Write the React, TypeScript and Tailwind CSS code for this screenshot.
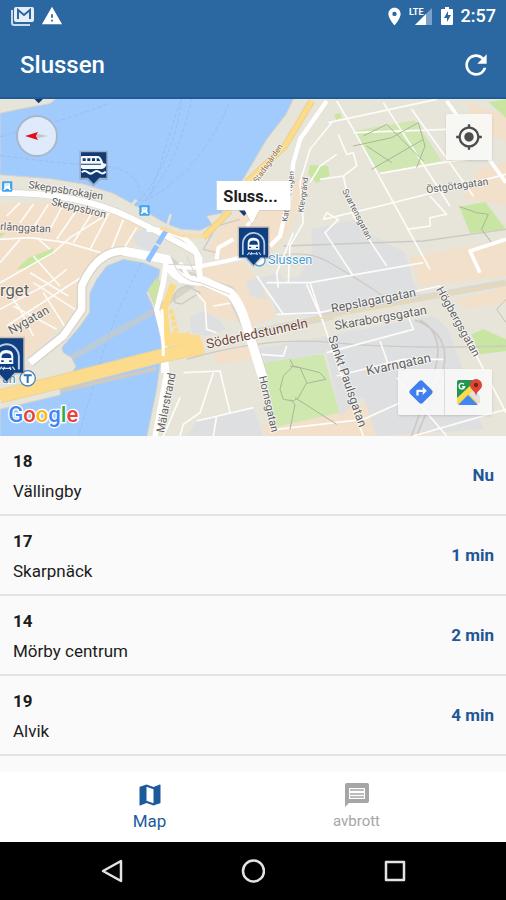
import React, { useState } from 'react';
import {
  MdDirections,
  MdLocationOn,
  MdMap,
  MdMyLocation,
  MdRefresh,
  MdWarning,
} from 'react-icons/md';

interface Departure {
  line: string;
  destination: string;
  time: string;
}

interface StreetLabel {
  name: string;
  x: number;
  y: number;
  angle: number;
  size: number;
  color?: string;
}

const departures: Departure[] = [
  { line: '18', destination: 'Vällingby', time: 'Nu' },
  { line: '17', destination: 'Skarpnäck', time: '1 min' },
  { line: '14', destination: 'Mörby centrum', time: '2 min' },
  { line: '19', destination: 'Alvik', time: '4 min' },
];

const streetLabels: StreetLabel[] = [
  { name: 'Skeppsbrokajen', x: 84, y: 276, angle: 9, size: 32 },
  { name: 'Skeppsbron', x: 152, y: 326, angle: 14, size: 32 },
  { name: 'rlånggatan', x: 0, y: 402, angle: 3, size: 32 },
  { name: 'rget', x: 0, y: 600, angle: 0, size: 50 },
  { name: 'Nygatan', x: 34, y: 716, angle: -30, size: 36 },
  { name: 'Stadsgården', x: 772, y: 262, angle: -55, size: 24, color: '#8a6a4c' },
  { name: 'Katarinavägen', x: 862, y: 378, angle: -82, size: 24 },
  { name: 'Klevgränd', x: 910, y: 350, angle: -82, size: 24 },
  { name: 'Svartensgatan', x: 1026, y: 284, angle: 63, size: 26 },
  { name: 'Östgötagatan', x: 1280, y: 292, angle: -8, size: 31 },
  { name: 'Repslagargatan', x: 996, y: 650, angle: -11, size: 37 },
  { name: 'Skaraborgsgatan', x: 1006, y: 702, angle: -10, size: 37 },
  { name: 'Kvarngatan', x: 1102, y: 838, angle: -12, size: 39 },
  { name: 'Högbergsgatan', x: 1308, y: 580, angle: 61, size: 34 },
  { name: 'Sankt Paulsgatan', x: 984, y: 724, angle: 71, size: 37 },
  { name: 'Hornsgatan', x: 776, y: 842, angle: 77, size: 33 },
  { name: 'Mälarstrand', x: 492, y: 1012, angle: -79, size: 34 },
  { name: 'Söderledstunneln', x: 622, y: 758, angle: -12, size: 40, color: '#6d4538' },
];

// metro pin, 84 x 108 units with its tip at the bottom center
const MetroPin = ({ x, y, scale }: { x: number; y: number; scale: number }) => (
  <g transform={`translate(${x} ${y}) scale(${scale})`}>
    <path d="M-4-4h92v94H66L42 114 18 90H-4z" fill="#7b7f8a" opacity=".35" />
    <path d="M0 0h84v86H62L42 108 22 86H0z" fill="#0f3f80" />
    <path d="M11 78V46a31 31 0 0 1 62 0v32" fill="none" stroke="#b9cde6" strokeWidth="5" />
    <path d="M25 64V44q0-15 17-15t17 15v20z" fill="#f4f8fc" />
    <path d="M30 45q1-8 12-8t12 8v4H30z" fill="#0f3f80" />
    <path d="M29 57h6m14 0h6" stroke="#0f3f80" strokeWidth="4" />
    <path d="M30 71l-6 8m13-8l-3 8m16-8l3 8m4-8l6 8M30 75h24" stroke="#d6e3f2" strokeWidth="3" />
  </g>
);

const FerryPin = ({ x, y }: { x: number; y: number }) => (
  <g transform={`translate(${x} ${y})`}>
    <path d="M-5-5h86v88H58L38 102 18 83H-5z" fill="#9299a8" opacity=".6" />
    <path d="M0 0h76v76H55L38 94 21 76H0z" fill="#123a73" />
    <path d="M0 14q0-3 4-3h48q9 3 15 22l9 2q-2 14-14 15H5L0 46z" fill="#f7fafc" />
    <path d="M5 18h9v8H5zm14 0h9v8h-9zm14 0h9v8h-9zm14 0h6l5 8H47zM0 34h60v3H0z" fill="#123a73" />
    <path d="M2 60q9-8 18 0t18 0 18 0 18-2" fill="none" stroke="#fff" strokeWidth="6" />
  </g>
);

const StationSquare = ({ x, y }: { x: number; y: number }) => (
  <g transform={`translate(${x} ${y})`}>
    <rect width="31" height="31" rx="3" fill="#42a5ee" />
    <path d="M7 6h17v14l3 6h-5l-3-4h-7l-3 4H4l3-6z" fill="#fff" />
    <path d="M11 11h9" stroke="#9fd0f7" strokeWidth="3" />
  </g>
);

const CityMap = () => (
  <svg
    viewBox="0 9 1518 1011"
    preserveAspectRatio="xMidYMid slice"
    className="block h-full w-full font-[Roboto,sans-serif]"
    role="img"
    aria-label="Karta över Slussen"
  >
    <rect y="9" width="1518" height="1020" fill="#e7e4da" />

    {/* building blocks */}
    <g fill="#f2e0ca">
      <path d="M0 325L150 318 330 350 440 392 395 450 320 480 250 540 228 650 90 780 0 790z" />
      <path d="M740 330L860 250 930 250 900 330 870 400 820 470 690 490 620 470 660 400z" />
      <path d="M600 500L730 500 780 560 830 660 750 690 620 650 590 580z" />
      <path d="M1230 485L1518 430V540L1260 570z" />
      <path d="M1400 20L1518 60V140L1430 90z" />
      <path d="M1440 215L1518 200V330L1390 305z" />
      <path d="M1370 612L1518 570V620L1390 640z" />
      <path d="M640 770L750 750 760 790 650 806zM780 985L860 990 1110 915 1130 1020H800zM1195 930L1320 965 1280 1020H1190z" />
    </g>
    <g fill="#dedfe1">
      <path d="M935 400L1060 372 1120 420 1215 470 1240 560 1260 600 960 660 830 655 800 560 900 540 935 470z" />
      <path d="M740 556L840 530 860 570 790 585 800 610 750 600zM570 665L610 645 650 665 680 700 620 720 575 710z" />
      <path d="M770 760L1300 660 1345 700 1450 1000 1130 1020 1090 900 1020 960 980 770 800 800z" />
      <path d="M560 1020L590 975 760 935 790 1020zM395 415L440 395 480 420 460 465 410 450z" />
    </g>

    {/* parks */}
    <g fill="#c8e6a1">
      <path d="M1058 105L1245 73 1325 195 1140 232z" fill="#d0e7b3" />
      <path d="M1378 332L1455 318 1518 400 1410 412z" />
      <path d="M790 800L970 774 1018 950 830 992z" fill="#cfe8b0" />
      <path d="M930 207L985 210 988 240 950 262 925 235zM1415 715L1450 700 1518 730V765L1440 775z" />
      <path d="M50 520L85 485 160 457 160 475 90 515zM0 410L18 412 0 425zM1465 18L1518 10V65zM1002 55l20-3 2 14-16 5z" />
    </g>

    {/* water */}
    <g fill="#a2cbfd" stroke="#d5d2c8" strokeWidth="3">
      <path d="M0 52L60 39 150 23 172 5H882L858 55 800 130 735 240 700 297 665 352 620 360 636 386 600 403 545 400 500 384 400 325 340 292 250 264 150 248 0 236z" />
      <path d="M370 490L430 500 480 520 475 550 440 590 460 635 477 700 487 760 470 880 440 1024H0V940L180 897 187 870 228 812 215 785 190 770 185 755 240 690 268 650 270 590 290 550 320 510z" />
      <path d="M444 581L472 544 480 560 465 630z" fill="#c8e6a1" />
    </g>
    <g fill="none" stroke="#7faee0" strokeWidth="2" strokeDasharray="12 7" opacity=".65">
      <path d="M0 122Q210 70 325 22M0 178Q160 200 245 205M320 212Q410 220 420 290M405 330Q520 200 545 9M425 320Q530 220 575 9M435 315Q600 230 690 15M450 300Q490 180 540 15" />
      <path d="M425 500Q340 660 300 800T235 1020" />
    </g>

    {/* rail lines */}
    <g fill="none" stroke="#cccac3">
      <path d="M215 785L470 640 600 550" strokeWidth="18" opacity=".65" />
      <path d="M180 885L470 818" strokeWidth="12" />
      <path d="M560 790Q800 720 1000 740T1518 750M850 450L1270 435 1518 400" strokeWidth="4" />
      <path d="M1245 672Q1370 720 1320 850L1250 1020M1260 672Q1345 720 1295 850L1235 1020" strokeWidth="5" />
      <path d="M760 500Q900 450 980 495T1150 600L1240 600" strokeWidth="4" />
      <path d="M525 620Q515 580 560 570L600 590 545 624zM650 470L610 460 650 390 720 370" strokeWidth="4" />
      <path d="M960 660L1518 560M760 710L1000 660" strokeWidth="20" opacity=".45" />
    </g>

    {/* small streets */}
    <g fill="none" stroke="#fdfcf9" strokeWidth="5">
      <path d="M0 430L90 425 200 440 320 475M0 560L160 470 210 425 330 350M20 690L250 540M40 630L170 700M90 530L205 600M0 640L150 560 200 520M100 720L60 640 20 580M100 560L240 650M60 320L20 360M100 325L60 380M145 325L100 395M190 325L150 400M235 335L170 430M280 345L220 440M325 355L270 460M370 370L330 470M410 395L370 460" />
      <path d="M130 590L200 700M180 570L100 480M0 500L60 430M110 425L150 460" />
      <path d="M985 80L1310 10M1010 15L1060 100 1290 520M1150 20L1350 330M1060 110L1340 100M1235 40L1420 300M1290 300L1340 355 1290 365 1290 390 1220 400M970 370L1140 330 1518 235M1140 232L1325 200 1400 190" />
      <path d="M995 80L930 160 900 260 910 380 870 450 865 560M1015 115L1040 175 1060 170 1070 210 1030 240 960 250M1010 175L960 210 930 260M1030 240L1045 310 1060 360 1160 510M970 370L980 350 1015 370 975 410 1060 540M880 410L830 530 835 575" />
      <path d="M800 560L930 560 1270 500M770 540L850 655M830 655L960 650 1320 570M930 560L990 740 1090 1020M920 565L970 680M860 750L850 780 780 775M980 770L1240 700 1225 660M1140 735L1170 820M1010 840L1210 790 1330 790M1320 570L1518 950M1190 845L1340 1020" />
      <path d="M590 590L615 620 620 700 650 710M640 630L700 620M550 830L660 825 690 950M640 830L600 950 550 985 540 1020M540 905L490 1020M590 975L760 935M650 960L640 1020M830 1000L1090 970 1200 920M1240 1020L1518 940" />
    </g>

    {/* park paths */}
    <g fill="none" stroke="#aab698" strokeWidth="3">
      <path d="M1060 150L1175 125 1255 80M1090 120L1160 85 1270 195M1255 80L1275 150 1250 215M1115 220L1270 130M1100 150L1175 200M1378 332L1430 350 1465 355 1445 400 1475 440" />
      <path d="M870 790L880 810 850 840 840 880 850 910 880 915 895 905 920 860 900 815 870 810M880 810L960 830 978 850 920 862M870 910L885 925 870 1000M885 905L1010 985" />
      <path d="M1518 610L1490 640 1518 680" stroke="#c8c0b2" />
    </g>

    {/* main white roads */}
    <g fill="none" stroke="#d8d4ca" strokeLinejoin="round">
      <path d="M0 290Q240 290 390 365T590 470L600 540" strokeWidth="22" />
      <path d="M90 800L190 720 245 640 245 570Q290 465 370 465L500 490 560 540 690 585 740 690 790 840" strokeWidth="30" />
    </g>
    <g fill="none" stroke="#fff" strokeLinejoin="round">
      <path d="M0 290Q240 290 390 365T590 470L600 540" strokeWidth="18" />
      <path d="M440 400Q570 400 600 490L600 545" strokeWidth="14" />
      <path d="M90 800L190 720 245 640 245 570Q290 465 370 465L500 490" strokeWidth="22" />
      <path d="M370 465L500 490Q520 560 610 555L690 590Q720 620 740 690L790 850" strokeWidth="28" />
      <path d="M500 490L490 560 470 640 492 730 500 830 465 1020" strokeWidth="16" />
      <path d="M500 510L580 515 680 495 800 465M540 500L570 550M515 520L545 560M650 490L655 455 700 430" strokeWidth="12" />
      <path d="M980 15L900 130 880 200 870 290 840 420 810 450" strokeWidth="13" />
      <path d="M760 370L740 390M1340 15L1518 260M1518 430L1410 465 1440 530" strokeWidth="11" />
    </g>
    <g fill="none" stroke="#d9d6ce" strokeWidth="3">
      <path d="M520 500Q540 555 600 560L690 595M560 480L590 545M505 505L585 508" />
    </g>
    <path d="M502 398L440 500" stroke="#91c1ff" strokeWidth="15" strokeDasharray="54 6" />
    <path d="M390 330L410 312M500 395L512 355" stroke="#e7e2d5" strokeWidth="8" />

    {/* highways */}
    <g fill="none">
      <path d="M935 15L855 150 740 260M690 345L610 425" stroke="#e6cf92" strokeWidth="20" />
      <path d="M935 15L855 150 740 260M690 345L610 425" stroke="#fbdc8a" strokeWidth="15" />
      <path d="M480 395L545 418 610 420" stroke="#f8dda6" strokeWidth="11" />
      <path d="M520 565L492 640 505 750" stroke="#fcdb83" strokeWidth="20" />
      <path d="M512 640L540 750M560 710L570 750" stroke="#fcdb83" strokeWidth="14" strokeDasharray="14 5" />
      <path d="M0 901L180 857 490 778 610 754" stroke="#ead49b" strokeWidth="43" />
      <path d="M0 901L180 857 490 778 610 754" stroke="#fcdc8c" strokeWidth="37" />
      <path d="M505 750L515 708 600 718 605 745z" fill="#fcdc8c" />
      <path d="M920 675L1518 562" stroke="#ecd9a8" strokeWidth="5" />
    </g>
    <path d="M486 640L490 780M488 800V830" fill="none" stroke="#fff" strokeWidth="9" />

    <g>
      {streetLabels.map((label) => (
        <text
          key={label.name}
          transform={`translate(${label.x} ${label.y}) rotate(${label.angle})`}
          fontSize={label.size}
          fill={label.color || '#5f5f5f'}
          stroke="#ffffff"
          strokeWidth="5"
          strokeOpacity=".7"
          paintOrder="stroke"
        >
          {label.name}
        </text>
      ))}
    </g>

    <StationSquare x={6} y={256} />
    <StationSquare x={418} y={328} />

    {/* metro stations */}
    <text x="804" y="504" fontSize="38" fill="#4a9bd0" stroke="#fff" strokeWidth="5" paintOrder="stroke">
      Slussen
    </text>
    <circle cx="778" cy="493" r="17" fill="#fff" stroke="#5ba3d8" strokeWidth="4" />
    <text x="6" y="861" fontSize="37" fill="#3f87b8" stroke="#fff" strokeWidth="5" paintOrder="stroke">
      an
    </text>
    <circle cx="83" cy="847" r="23" fill="#fff" stroke="#4a86be" strokeWidth="4" />
    <path d="M71 838h24M83 838v23" stroke="#2c6fae" strokeWidth="6" />

    <path d="M103 9h26l-13 13z" fill="#123a73" />
    <FerryPin x={243} y={169} />
    <path d="M716 343h32l-16 17z" fill="#0f3f80" />
    <MetroPin x={717} y={395} scale={1.04} />
    <MetroPin x={-31} y={727} scale={1.2} />

    {/* callout */}
    <path d="M650 258h222v87h-94l-22 42-22-42h-84z" fill="#777" opacity=".3" />
    <path d="M650 255h222v88h-94l-22 40-22-40h-84z" fill="#fff" />
    <text x="670" y="318" fontSize="49" fontWeight="700" fill="#202020">
      Sluss...
    </text>

    <text x="25" y="979" fontSize="66" fontWeight="500" stroke="#fff" strokeWidth="8" paintOrder="stroke">
      <tspan fill="#4285f4">G</tspan>
      <tspan fill="#ea4335">o</tspan>
      <tspan fill="#fbbc05">o</tspan>
      <tspan fill="#4285f4">g</tspan>
      <tspan fill="#34a853">l</tspan>
      <tspan fill="#ea4335">e</tspan>
    </text>
  </svg>
);

const GoogleMapsIcon = () => (
  <svg viewBox="0 0 28 28" className="h-7 w-7" aria-hidden="true">
    <path d="M4 2h18v24H2V4q0-2 2-2z" fill="#219653" />
    <path d="M2 21L20 5l4 18-2 3H2z" fill="#f5d64a" />
    <path d="M14 16l5-5 6 7v6l-1 2z" fill="#dfe1e5" />
    <path d="M2 20L18 5l3 4L2 26z" fill="#fbdb4b" />
    <path d="M3 27l10-10 10 10z" fill="#4285f4" />
    <path d="M9 6.3a2.8 2.8 0 1 0 .6 2.5H7" fill="none" stroke="#fff" strokeWidth="1.4" />
    <path d="M21 1a6 6 0 0 0-6 6c0 5 5 5 6 11 1-6 6-6 6-11a6 6 0 0 0-6-6z" fill="#df4437" />
    <circle cx="21" cy="7" r="2.2" fill="#7c231d" />
  </svg>
);

const MessageIcon = () => (
  <svg viewBox="0 0 28 28" className="h-7 w-7" aria-hidden="true">
    <path d="M4 2h20q2 0 2 2v16q0 2-2 2H6l-4 4V4q0-2 2-2z" fill="currentColor" />
    <path d="M6 7h16v11H6z" fill="#fff" />
    <path d="M7 9h14M7 13h14M7 16h14" stroke="currentColor" strokeWidth="1.5" />
  </svg>
);

const StatusBar = () => (
  <div className="flex h-8 items-center justify-between pr-[10px] pl-[11px] text-white">
    <div className="flex items-center gap-[7px]">
      <svg viewBox="0 0 23 20" className="h-5 w-[23px]" aria-hidden="true">
        <path d="M1 4v13q0 2 2 2h16" fill="none" stroke="#c8daeb" strokeWidth="2" />
        <rect x="3" y="1" width="20" height="15" rx="2" fill="#e6eff8" />
        <path d="M7 13V4l6 5 6-5v9" fill="none" stroke="#2b68a2" strokeWidth="2" />
      </svg>
      <MdWarning className="h-[22px] w-[22px]" />
    </div>
    <div className="flex items-center">
      <MdLocationOn className="h-[21px] w-[21px]" />
      <svg viewBox="0 0 24 20" className="ml-1 h-5 w-6" aria-hidden="true">
        <path d="M23 2v17H6z" fill="#7ba2c8" />
        <path d="M17 8v11H6z" fill="#fff" />
        <text x="0" y="9" fontSize="9" fontWeight="700" fill="#fff" stroke="#2b68a2" strokeWidth="1" paintOrder="stroke" className="font-[Roboto,sans-serif]">
          LTE
        </text>
      </svg>
      <svg viewBox="0 0 12 18" className="ml-2 h-[18px] w-3" aria-hidden="true">
        <path d="M4 0h4v2h3q1 0 1 1v14q0 1-1 1H1q-1 0-1-1V3q0-1 1-1h3z" fill="#fff" />
        <path d="M7 4L3 11h3v4l4-7H7z" fill="#2b68a2" />
      </svg>
      <span className="ml-2 text-lg leading-5 font-medium">2:57</span>
    </div>
  </div>
);

const App: React.FC = () => {
  const [activeTab, setActiveTab] = useState('map');

  return (
    <div className="flex min-h-screen flex-col bg-[#fafafa] font-[Roboto,'Noto_Sans',sans-serif] text-[#1c1c1c]">
      <header className="border-b-2 border-[#1d5c99] bg-[#2b68a2]">
        <StatusBar />
        <div className="flex h-[65px] items-center justify-between pt-px pr-[14px] pl-5 text-white">
          <h1 className="text-2xl font-medium">Slussen</h1>
          <button type="button" aria-label="Uppdatera" className="flex h-8 w-8 items-center justify-center">
            <MdRefresh className="h-8 w-8" />
          </button>
        </div>
      </header>

      <section className="relative aspect-[506/337] w-full overflow-hidden">
        <CityMap />
        <button
          type="button"
          aria-label="Kompass"
          className="absolute top-4 left-4 flex h-[42px] w-[42px] items-center justify-center rounded-full border-2 border-[#a9b7cb] bg-[#dfeafa]"
        >
          <svg viewBox="0 0 24 10" className="h-[10px] w-6" aria-hidden="true">
            <path d="M0 5l13-4-2 4 2 4z" fill="#e0101b" />
            <path d="M11 5l2-2 10 2-10 2z" fill="#c5c6c8" />
          </svg>
        </button>
        <button
          type="button"
          aria-label="Min plats"
          className="absolute top-[15px] right-[14px] flex h-[46px] w-[46px] items-center justify-center rounded-xs bg-[#f8f8f6]/95 text-[#4d4d4d] shadow"
        >
          <MdMyLocation className="h-7 w-7" />
        </button>
        <div className="absolute right-[14px] bottom-[21px] flex divide-x divide-[#dcdcdc] rounded-xs bg-[#f8f8f8]/90 shadow">
          <button type="button" aria-label="Vägbeskrivning" className="flex h-[46px] w-[47px] items-center justify-center text-[#3f80ee]">
            <MdDirections className="h-7 w-7" />
          </button>
          <button type="button" aria-label="Öppna i Google Maps" className="flex h-[46px] w-[47px] items-center justify-center">
            <GoogleMapsIcon />
          </button>
        </div>
      </section>

      <ul className="flex-1">
        {departures.map((departure) => (
          <li
            key={departure.line}
            className="flex h-20 items-center justify-between border-b-2 border-[#e2e2e2] pt-[2px] pr-3 pl-[13px]"
          >
            <div>
              <p className="text-[17px] leading-[30px] font-bold">{departure.line}</p>
              <p className="text-[17px] leading-[30px]">{departure.destination}</p>
            </div>
            <span className="text-[17px] font-bold text-[#1f5796]">{departure.time}</span>
          </li>
        ))}
      </ul>

      <nav className="flex h-[70px] bg-white px-[46px]">
        <button
          type="button"
          onClick={() => setActiveTab('map')}
          className={`flex flex-1 flex-col items-center justify-center ${activeTab === 'map' ? 'text-[#1d5a9c]' : 'text-[#a6a6a6]'}`}
        >
          <MdMap className="h-7 w-7" />
          <span className="text-[17px] leading-6">Map</span>
        </button>
        <button
          type="button"
          onClick={() => setActiveTab('avbrott')}
          className={`flex flex-1 flex-col items-center justify-center ${activeTab === 'avbrott' ? 'text-[#1d5a9c]' : 'text-[#a6a6a6]'}`}
        >
          <MessageIcon />
          <span className="text-[15px] leading-6">avbrott</span>
        </button>
      </nav>

      <footer className="flex h-[58px] bg-black px-[41px]">
        <button type="button" aria-label="Tillbaka" className="flex flex-1 items-center justify-center">
          <svg viewBox="0 0 24 24" className="h-6 w-6" fill="none" stroke="#e3e3e3" strokeWidth="2.5" strokeLinejoin="round">
            <path d="M21 2v20L3 12z" />
          </svg>
        </button>
        <button type="button" aria-label="Hem" className="flex flex-1 items-center justify-center">
          <svg viewBox="0 0 24 24" className="h-6 w-6" fill="none" stroke="#e3e3e3" strokeWidth="2.5">
            <circle cx="12.5" cy="12" r="10.5" />
          </svg>
        </button>
        <button type="button" aria-label="Översikt" className="flex flex-1 items-center justify-center">
          <svg viewBox="0 0 24 24" className="h-6 w-6" fill="none" stroke="#e3e3e3" strokeWidth="2.5" strokeLinejoin="round">
            <rect x="4" y="3" width="18" height="18" />
          </svg>
        </button>
      </footer>
    </div>
  );
};

export default App;
